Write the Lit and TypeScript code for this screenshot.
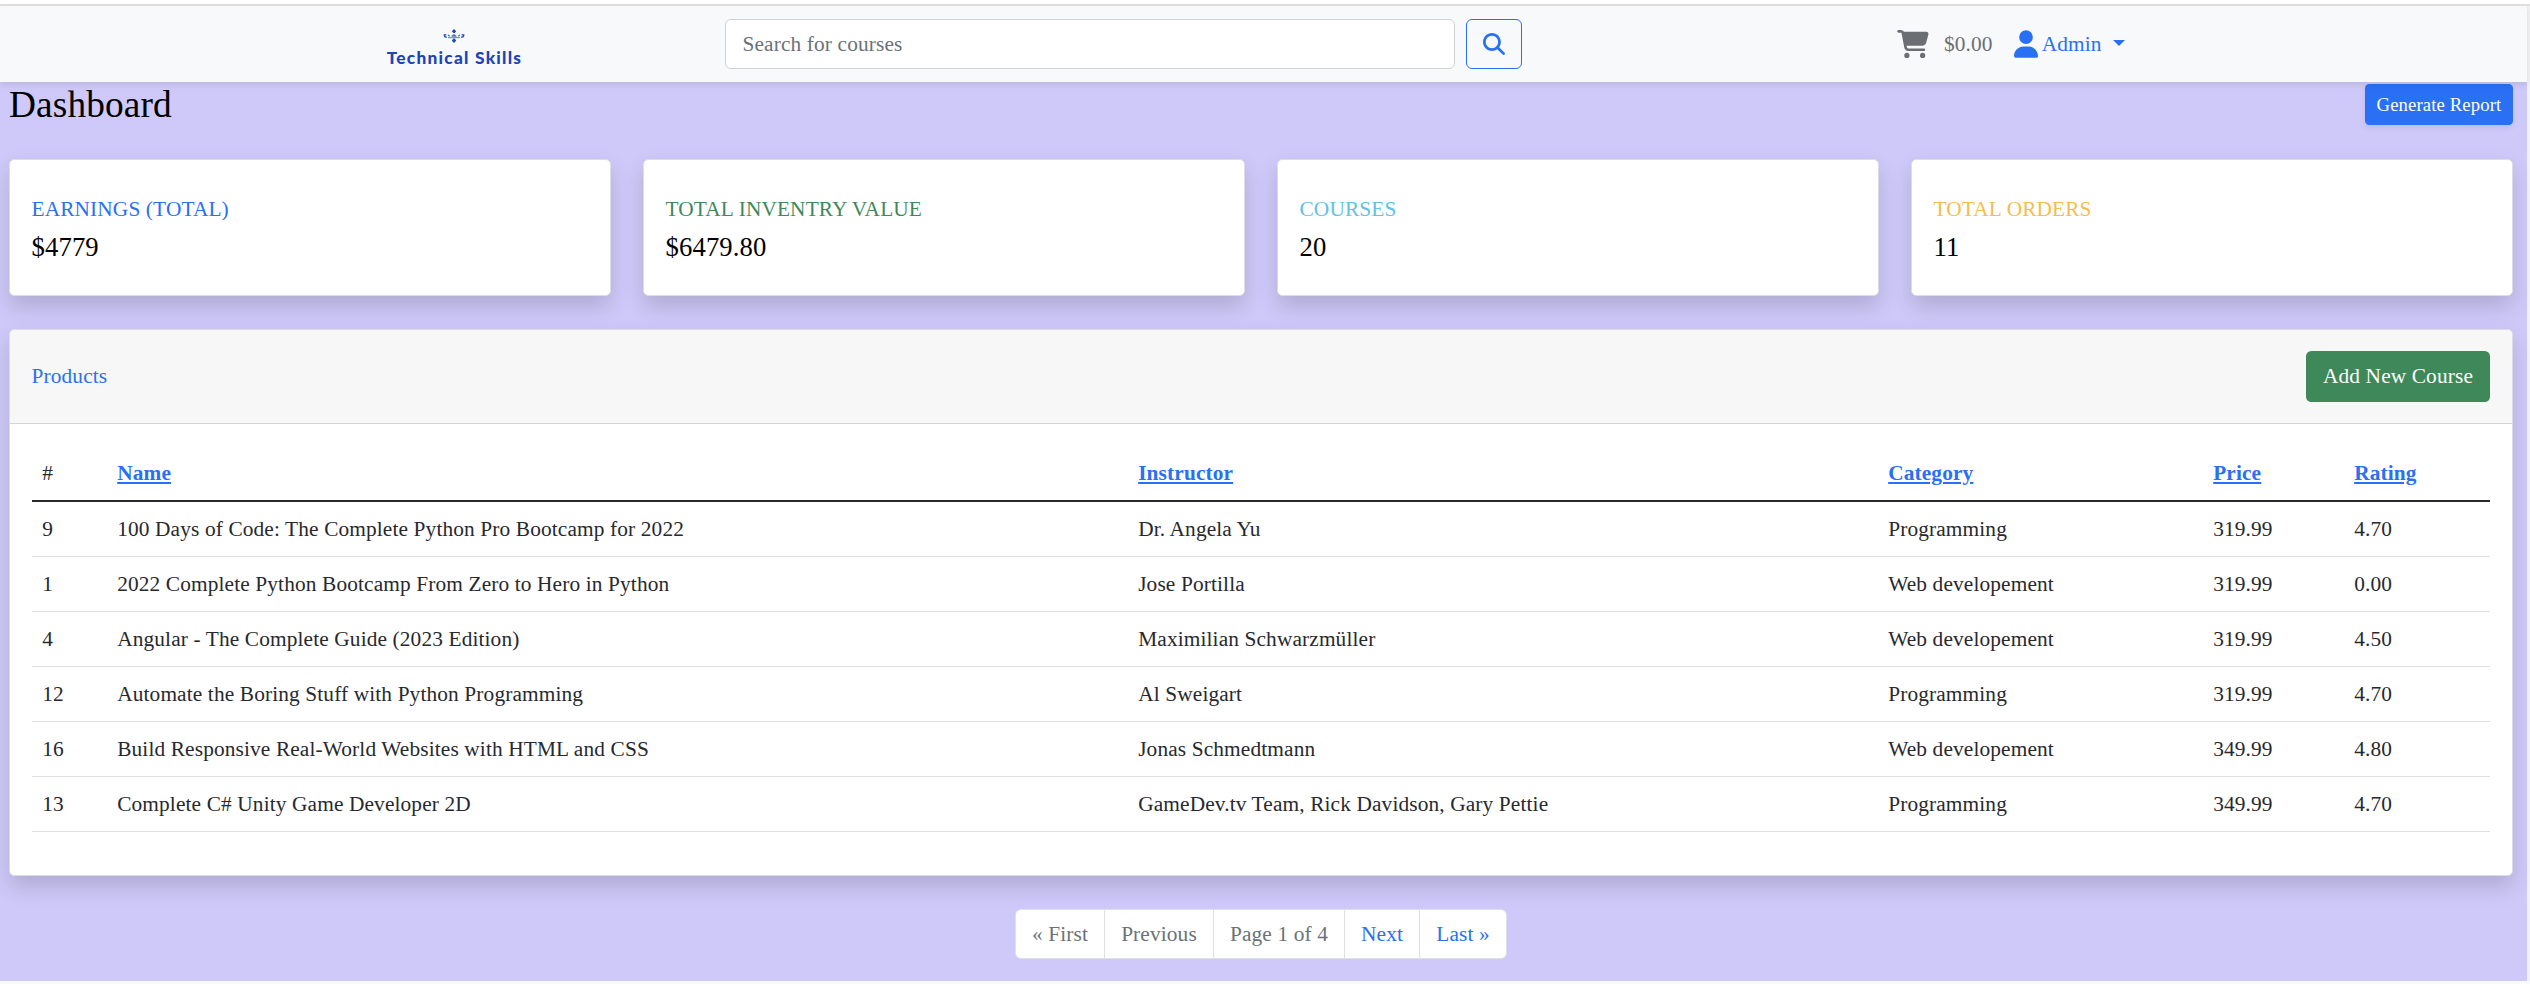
import { LitElement, html, css } from "lit";
import { customElement } from "lit/decorators.js";

const BASE = css`
  :host { display: block; box-sizing: border-box; }
  * { box-sizing: border-box; }
  a { color: #2970f4; text-decoration: none; }
`;

@customElement("site-navbar")
class SiteNavbar extends LitElement {
  static styles = [BASE, css`
    :host { position: relative; }
    .bar { display: grid; grid-template-columns: 725px 797px 1fr; align-items: center; height: 76px;
      background: #f8f9fb; box-shadow: 0 2.67px 5.33px rgba(0,0,0,.095); }
    .brand { display: flex; flex-direction: column; align-items: center; width: 140px; margin: 9px 0 0 384px; }
    .mark { display: block; width: 22px; height: 14px; }
    .brand-name { font: 900 17.3px/22px Lato, sans-serif; color: #1d43b8; margin-top: 4px; white-space: nowrap; letter-spacing: 1.25px; margin-right: -1px; }
    .search { display: flex; gap: 10.7px; height: 50px; }
    .field { flex: 1; border: 1px solid #ced2d6; border-radius: 6px; padding: 0 16.5px; font: inherit; letter-spacing: inherit; color: #212529; background: #fff; min-width: 0; }
    .field::placeholder { color: #6a7278; opacity: 1; }
    .go { width: 56px; border: 1px solid #2970f4; border-radius: 6px; background: none; padding: 0; display: grid; place-items: center; }
    .go svg { display: block; width: 22px; height: 22px; }
    .account { display: flex; align-items: center; padding-left: 375px; color: #6b6f74; line-height: 32px; }
    .cart { width: 32px; height: 28px; margin-right: 15px; }
    .amount { margin-right: 21px; }
    .user { width: 24px; height: 28px; margin-right: 4px; }
    .menu { display: flex; align-items: center; }
    .caret { margin: -3px 0 0 11px; border: 6.4px solid transparent; border-top-color: #2970f4; border-bottom: 0; }
  `];
  render() {
    return html`<nav class="bar">
      <div class="brand">
        <svg class="mark" viewBox="0 0 22 14" fill="#2448b8">
          <path d="M11 0l2.200 2.200L11.700 4h-1.400L8.800 2.200zM11 14l-2.200-2.200L10.300 9.500h1.400l1.500 2.300z" />
          <path d="M8.600 6.400L11 5l2.400 1.400v1.400H8.600z" fill="#5a73c6" />
          <path d="M3.300 5.600L1.200 6l.6 1.700 2 .6M18.700 5.600l2.100.4-.6 1.700-2 .6" stroke="#2448b8" stroke-width="1.300" fill="none" />
          <path d="M5.300 5.800l1.200 1.500M16.700 5.800l-1.200 1.500" stroke="#2448b8" stroke-width="1.100" />
          <path d="M5 8.600h12" stroke="#7e91d2" stroke-width="1.200" />
        </svg>
        <span class="brand-name">Technical Skills</span>
      </div>
      <form class="search">
        <input class="field" placeholder="Search for courses" />
        <button class="go" type="button" aria-label="Search">
          <svg viewBox="0 0 512 512" fill="#2970f4"><path d="M416 208c0 45.900-14.900 88.300-40 122.700L502.600 457.400c12.500 12.500 12.500 32.800 0 45.300s-32.800 12.500-45.300 0L330.700 376c-34.400 25.200-76.800 40-122.700 40C93.100 416 0 322.900 0 208S93.100 0 208 0S416 93.100 416 208zM208 352c79.500 0 144-64.500 144-144s-64.500-144-144-144S64 128.500 64 208s64.500 144 144 144z" /></svg>
        </button>
      </form>
      <div class="account">
        <svg class="cart" viewBox="0 0 576 512" fill="#6b6f74"><path d="M0 24C0 10.700 10.700 0 24 0H69.500c22 0 41.500 12.800 50.600 32h411c26.300 0 45.500 25 38.600 50.400l-41 152.300c-8.500 31.400-37 53.300-69.500 53.300H170.700l5.400 28.500c2.200 11.300 12.100 19.500 23.600 19.500H488c13.300 0 24 10.700 24 24s-10.700 24-24 24H199.700c-34.600 0-64.300-24.600-70.700-58.500L77.400 54.500c-.7-3.800-4-6.500-7.900-6.500H24C10.700 48 0 37.300 0 24zM128 464a48 48 0 1 1 96 0 48 48 0 1 1-96 0zm336-48a48 48 0 1 1 0 96 48 48 0 1 1 0-96z" /></svg>
        <span class="amount">$0.00</span>
        <svg class="user" viewBox="0 0 448 512" fill="#2970f4"><path d="M224 256a128 128 0 1 0 0-256 128 128 0 1 0 0 256zm-45.700 48C79.800 304 0 383.800 0 482.300 0 498.700 13.300 512 29.700 512h388.600c16.400 0 29.700-13.300 29.700-29.700C448 383.800 368.200 304 269.700 304h-91.400z" /></svg>
        <a class="menu">Admin<span class="caret"></span></a>
      </div>
    </nav>`;
  }
}

@customElement("stat-card")
class StatCard extends LitElement {
  static properties = { label: {}, value: {}, tone: {} };
  declare label: string;
  declare value: string;
  declare tone: string;
  static styles = [BASE, css`
    .card { height: 137px; padding: 36.500px 21.500px 0; background: #fff; border: 1px solid #dddce6; border-radius: 5.3px;
      box-shadow: 0 10.67px 21.33px rgba(0,0,0,.15); }
    .label { line-height: 25.6px; margin-bottom: 5.3px; text-transform: uppercase; }
    .primary { color: #2970f4; }
    .success { color: #3f885a; }
    .info { color: #62c1e5; }
    .warning { color: #f5bd4f; }
    .value { font-size: 26.67px; line-height: 32px; padding-top: 3.5px; color: #000; }
  `];
  render() {
    return html`<div class="card">
      <div class="label ${this.tone}">${this.label}</div>
      <div class="value">${this.value}</div>
    </div>`;
  }
}

const COURSES = [
  ["9", "100 Days of Code: The Complete Python Pro Bootcamp for 2022", "Dr. Angela Yu", "Programming", "319.99", "4.70"],
  ["1", "2022 Complete Python Bootcamp From Zero to Hero in Python", "Jose Portilla", "Web developement", "319.99", "0.00"],
  ["4", "Angular - The Complete Guide (2023 Edition)", "Maximilian Schwarzmüller", "Web developement", "319.99", "4.50"],
  ["12", "Automate the Boring Stuff with Python Programming", "Al Sweigart", "Programming", "319.99", "4.70"],
  ["16", "Build Responsive Real-World Websites with HTML and CSS", "Jonas Schmedtmann", "Web developement", "349.99", "4.80"],
  ["13", "Complete C# Unity Game Developer 2D", "GameDev.tv Team, Rick Davidson, Gary Pettie", "Programming", "349.99", "4.70"],
];

@customElement("product-table")
class ProductTable extends LitElement {
  static styles = [BASE, css`
    .card { height: 547px; background: #fff; border: 1px solid #dddce6; border-radius: 5.3px; box-shadow: 0 10.67px 21.33px rgba(0,0,0,.15); }
    .head { height: 94px; display: flex; align-items: center; justify-content: space-between; padding: 0 22px 0 21.500px;
      background: #f7f7f7; border-bottom: 1px solid #d3d4d5; border-radius: 4.3px 4.3px 0 0; }
    .title { color: #2970f4; }
    .add { height: 51px; width: 184px; border: 0; border-radius: 5.3px; background: #3f885a; color: #fff; font: inherit; letter-spacing: inherit; padding: 0; }
    .body { padding: 21px 22px 21px 21.500px; color: #27292e; }
    .row { display: grid; grid-template-columns: 75px 1021px 750px 325px 141px 1fr; height: 55px; line-height: 32px;
      padding: 11px 0 0 10.7px; border-bottom: 1px solid #dee0e3; }
    .header { height: 57px; padding-top: 12px; border-bottom: 2px solid #27292e; font-weight: 700; }
    .header a { text-decoration: underline; text-decoration-thickness: 2px; text-underline-offset: 2px; }
    .hash { font-weight: 400; }
  `];
  render() {
    return html`<section class="card">
      <div class="head"><span class="title">Products</span><button class="add">Add New Course</button></div>
      <div class="body">
        <div class="row header"><span class="hash">#</span>${["Name", "Instructor", "Category", "Price", "Rating"].map((h) => html`<span><a>${h}</a></span>`)}</div>
        ${COURSES.map((c) => html`<div class="row">${c.map((v) => html`<span>${v}</span>`)}</div>`)}
      </div>
    </section>`;
  }
}

@customElement("page-nav")
class PageNav extends LitElement {
  static styles = [BASE, css`
    .pages { display: flex; width: 492px; height: 50px; margin: 0 auto; background: #fff; border: 1px solid #dde0e4; border-radius: 6px; line-height: 48px; text-align: center; color: #6a7278; }
    .pages span { border-left: 1px solid #dde0e4; }
    .pages .first { width: 88px; border-left: 0; }
    .prev { width: 109px; }
    .info { width: 131px; }
    .next { width: 75px; color: #2970f4; }
    .last { flex: 1; color: #2970f4; }
  `];
  render() {
    return html`<div class="pages">
      <span class="first">« First</span><span class="prev">Previous</span><span class="info">Page 1 of 4</span><span class="next">Next</span><span class="last">Last »</span>
    </div>`;
  }
}

@customElement("app-root")
class AppRoot extends LitElement {
  static styles = [BASE, css`
    :host { height: 984px; overflow: hidden; background: #f8f9fb; font-family: "Liberation Serif", "Times New Roman", serif; font-size: 21.33px; letter-spacing: .135px; }
    .top { height: 6px; background: #fff; border-bottom: 2px solid #dfdfe0; }
    .view { width: 2530px; border-right: 3px solid #f1f0f3; }
    .page { height: 899px; padding: 0 14px 0 9px; background: #cfc9f9; }
    .heading { display: flex; justify-content: space-between; height: 77px; padding-top: 2px; }
    .title { margin: -2px 0 0; font-weight: 400; font-size: 37.33px; line-height: 45px; color: #000; }
    .report { height: 41px; width: 148px; border: 0; border-radius: 4.3px; padding: 0; background: #2970f4; color: #fff;
      font: inherit; letter-spacing: inherit; font-size: 18.67px; box-shadow: 0 2.67px 5.33px rgba(0,0,0,.075); }
    .stats { display: grid; grid-template-columns: repeat(4, 1fr); gap: 32px; margin-bottom: 33px; }
    .pager { margin-top: 33px; }
  `];
  render() {
    return html`
      <div class="top"></div>
      <div class="view">
        <site-navbar></site-navbar>
        <main class="page">
          <div class="heading"><h1 class="title">Dashboard</h1><button class="report">Generate Report</button></div>
          <div class="stats">
            <stat-card label="Earnings (Total)" value="$4779" tone="primary"></stat-card>
            <stat-card label="Total Inventry Value" value="$6479.80" tone="success"></stat-card>
            <stat-card label="Courses" value="20" tone="info"></stat-card>
            <stat-card label="Total Orders" value="11" tone="warning"></stat-card>
          </div>
          <product-table></product-table>
          <page-nav class="pager"></page-nav>
        </main>
      </div>`;
  }
}
